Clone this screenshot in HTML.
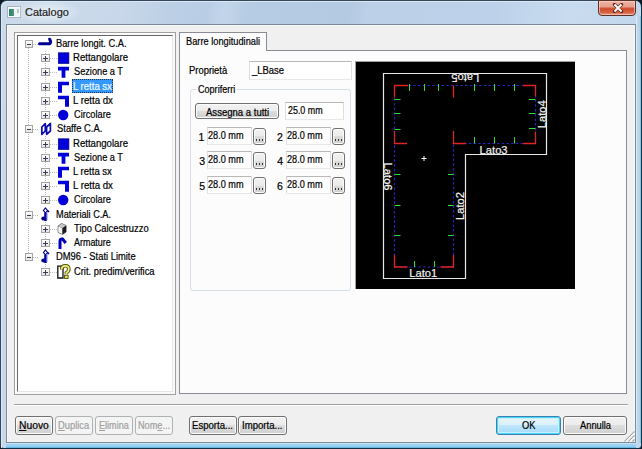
<!DOCTYPE html>
<html><head><meta charset="utf-8"><style>*{margin:0;padding:0;box-sizing:border-box}
html,body{width:642px;height:449px;overflow:hidden;background:#0a1a22}
body{position:relative;font-family:"Liberation Sans",sans-serif;font-size:10px;color:#000}
.a{position:absolute}
.t{position:absolute;white-space:nowrap;transform-origin:0 0;line-height:1;color:#000;-webkit-text-stroke:0.2px currentColor}
u{text-decoration:underline;text-underline-offset:1px}
#win{left:0;top:0;width:642px;height:449px;border:1px solid #34465a;border-right-color:#083048;border-bottom-color:#103048;border-radius:7px 7px 4px 4px;background:linear-gradient(100deg,#cbdaea 0,#c8d8ea 120px,#bccfe5 170px,#b9cee6 205px,#c3d5ea 222px,#b6cce4 245px,#b4cae2 345px,#bcd0e8 362px,#bdd2ea 490px,#c8dbef 560px,#c2d6ec 642px)}
#client{left:6px;top:24px;width:630px;height:419px;border:1px solid #7a8a98;background:#f0f0f0;box-shadow:inset 1px 1px 0 #f8f8f8,inset -1px -1px 0 #f6f6f6}
.btn{position:absolute;border:1px solid #707070;border-radius:3px;background:linear-gradient(#f2f2f2 0,#ebebeb 50%,#dddddd 50%,#cfcfcf 100%);box-shadow:inset 0 0 0 1px #fcfcfc}
.btn.dis{border-color:#adb2b5;background:#f4f4f4;box-shadow:none}
.edit{position:absolute;background:#fff;border:1px solid #dedede;border-top-color:#b8b8b8;border-bottom-color:#e8e8e8}</style></head><body>
<div id="win" class="a"></div>
<div class="a" style="left:1px;top:1px;width:640px;height:447px;border:1px solid #dce8f4;border-right:none;border-bottom:none;border-radius:6px 6px 0 0"></div>
<div class="a" style="left:6px;top:443px;width:630px;height:5px;background:linear-gradient(#cce2f2 0,#cce2f2 20%,#a0d4f4 20%,#90d0f8 70%,#58a8d0 100%)"></div>
<div class="a" style="left:636px;top:16px;width:5px;height:427px;background:linear-gradient(90deg,#dce8f6 0,#dce8f6 20%,#c4d8ec 20%,#b4d4ea 70%,#78c0dc 100%)"></div>
<div class="a" style="left:7px;top:6px;width:14px;height:12px;border:1px solid #a8b4c4;background:#eef3f6;box-shadow:inset 0 0 0 1px #f8fcfc"></div><div class="a" style="left:9px;top:9px;width:5px;height:7px;background:linear-gradient(90deg,#2f7e64,#4a9a80)"></div><div class="a" style="left:17px;top:9px;width:2px;height:4px;background:#b8c0c4"></div>
<div class="a" style="left:14px;top:0px;width:68px;height:24px;background:radial-gradient(closest-side,rgba(240,246,250,.75),rgba(240,246,250,.35) 60%,rgba(240,246,250,0))"></div>
<div class="t" style="left:25.35px;top:7.00px;font-size:11px;transform:scaleX(0.995);color:#222">Catalogo</div>
<div class="a" style="left:598px;top:0;width:38px;height:16px;border:1px solid #5a3028;border-radius:0 0 4px 4px;background:linear-gradient(#eeb4a4 0,#e6a08c 40%,#cf4a2e 55%,#d4603f 80%,#e49a84 100%);box-shadow:inset 0 0 0 1px rgba(255,220,210,.6)"></div>
<svg class="a" style="left:612px;top:3px" width="12" height="10"><path d="M2.5,1.5L9.5,8.5M9.5,1.5L2.5,8.5" stroke="#6a3028" stroke-width="3.4" stroke-linecap="round"/><path d="M2.5,1.5L9.5,8.5M9.5,1.5L2.5,8.5" stroke="#fff" stroke-width="1.8"/></svg>
<div id="client" class="a"></div>
<div class="a" style="left:14px;top:32px;width:162px;height:363px;border:1px solid #a0a0a0;background:#f8f8f8"></div>
<div class="a" style="left:15px;top:33px;width:160px;height:361px;border:1px solid #fff;border-right:none;border-bottom:none"></div>
<div class="a" style="left:17px;top:35px;width:156px;height:357px;background:#fff;border:1px solid #696969;border-right-color:#e6e6e6;border-bottom-color:#e6e6e6"></div>
<svg class="a" style="left:0;top:0" width="180" height="400"><defs><linearGradient id="bg" x1="0" y1="0" x2="0" y2="1"><stop offset="0" stop-color="#fff"/><stop offset="1" stop-color="#e4e4e4"/></linearGradient></defs><path d="M28.5,48V253" stroke="#bcbcbc" stroke-width="1" stroke-dasharray="1 1"/><path d="M45.5,51V111" stroke="#bcbcbc" stroke-width="1" stroke-dasharray="1 1"/><path d="M45.5,136V196" stroke="#bcbcbc" stroke-width="1" stroke-dasharray="1 1"/><path d="M45.5,222V239" stroke="#bcbcbc" stroke-width="1" stroke-dasharray="1 1"/><path d="M45.5,264V268" stroke="#bcbcbc" stroke-width="1" stroke-dasharray="1 1"/><path d="M33,44.5H38" stroke="#bcbcbc" stroke-width="1" stroke-dasharray="1 1"/><rect x="25.5" y="40.5" width="7" height="7" fill="url(#bg)" stroke="#a4a4a4" stroke-width="1"/><path d="M27,44.5H31" stroke="#3a3a50" stroke-width="1"/><path d="M39.5,43.80H48.2Q50.6,43.80 50.6,41.40L49.6,39.20" fill="none" stroke="#000098" stroke-width="3" stroke-linejoin="round" stroke-linecap="round"/><path d="M50,58.5H57" stroke="#bcbcbc" stroke-width="1" stroke-dasharray="1 1"/><rect x="41.5" y="54.5" width="8" height="7" fill="url(#bg)" stroke="#a4a4a4" stroke-width="1"/><path d="M43,58.5H48M45.5,56V61" stroke="#3a3a50" stroke-width="1"/><rect x="58.3" y="52.80" width="10.6" height="10.6" fill="#0000d8" stroke="#000090" stroke-width="0.7"/><path d="M50,72.5H57" stroke="#bcbcbc" stroke-width="1" stroke-dasharray="1 1"/><rect x="41.5" y="68.5" width="8" height="7" fill="url(#bg)" stroke="#a4a4a4" stroke-width="1"/><path d="M43,72.5H48M45.5,70V75" stroke="#3a3a50" stroke-width="1"/><path d="M58,66.70h11v3.8h-3.6v7.2h-3.8v-7.2h-3.6z" fill="#0000d8"/><path d="M50,87.5H57" stroke="#bcbcbc" stroke-width="1" stroke-dasharray="1 1"/><rect x="41.5" y="83.5" width="8" height="7" fill="url(#bg)" stroke="#a4a4a4" stroke-width="1"/><path d="M43,87.5H48M45.5,85V90" stroke="#3a3a50" stroke-width="1"/><path d="M58,81.70h11v3.6h-7v7.4h-4z" fill="#0000d8"/><path d="M50,101.5H57" stroke="#bcbcbc" stroke-width="1" stroke-dasharray="1 1"/><rect x="41.5" y="97.5" width="8" height="7" fill="url(#bg)" stroke="#a4a4a4" stroke-width="1"/><path d="M43,101.5H48M45.5,99V104" stroke="#3a3a50" stroke-width="1"/><path d="M58,95.70h11v11h-4v-7.4h-7z" fill="#0000d8"/><path d="M50,115.5H57" stroke="#bcbcbc" stroke-width="1" stroke-dasharray="1 1"/><rect x="41.5" y="111.5" width="8" height="7" fill="url(#bg)" stroke="#a4a4a4" stroke-width="1"/><path d="M43,115.5H48M45.5,113V118" stroke="#3a3a50" stroke-width="1"/><circle cx="63.2" cy="115.00" r="5.2" fill="#0000d8"/><path d="M33,129.5H38" stroke="#bcbcbc" stroke-width="1" stroke-dasharray="1 1"/><rect x="25.5" y="125.5" width="7" height="7" fill="url(#bg)" stroke="#a4a4a4" stroke-width="1"/><path d="M27,129.5H31" stroke="#3a3a50" stroke-width="1"/><path d="M41.8,127.00L45.3,123.70V131.00L41.8,134.30Z M46.6,127.00L50.4,123.50V131.00L46.6,134.30Z" fill="#fff" stroke="#0a0ab0" stroke-width="1.7" stroke-linejoin="round"/><path d="M50,144.5H57" stroke="#bcbcbc" stroke-width="1" stroke-dasharray="1 1"/><rect x="41.5" y="140.5" width="8" height="7" fill="url(#bg)" stroke="#a4a4a4" stroke-width="1"/><path d="M43,144.5H48M45.5,142V147" stroke="#3a3a50" stroke-width="1"/><rect x="58.3" y="138.80" width="10.6" height="10.6" fill="#0000d8" stroke="#000090" stroke-width="0.7"/><path d="M50,158.5H57" stroke="#bcbcbc" stroke-width="1" stroke-dasharray="1 1"/><rect x="41.5" y="154.5" width="8" height="7" fill="url(#bg)" stroke="#a4a4a4" stroke-width="1"/><path d="M43,158.5H48M45.5,156V161" stroke="#3a3a50" stroke-width="1"/><path d="M58,152.70h11v3.8h-3.6v7.2h-3.8v-7.2h-3.6z" fill="#0000d8"/><path d="M50,172.5H57" stroke="#bcbcbc" stroke-width="1" stroke-dasharray="1 1"/><rect x="41.5" y="168.5" width="8" height="7" fill="url(#bg)" stroke="#a4a4a4" stroke-width="1"/><path d="M43,172.5H48M45.5,170V175" stroke="#3a3a50" stroke-width="1"/><path d="M58,166.70h11v3.6h-7v7.4h-4z" fill="#0000d8"/><path d="M50,186.5H57" stroke="#bcbcbc" stroke-width="1" stroke-dasharray="1 1"/><rect x="41.5" y="182.5" width="8" height="7" fill="url(#bg)" stroke="#a4a4a4" stroke-width="1"/><path d="M43,186.5H48M45.5,184V189" stroke="#3a3a50" stroke-width="1"/><path d="M58,180.70h11v11h-4v-7.4h-7z" fill="#0000d8"/><path d="M50,200.5H57" stroke="#bcbcbc" stroke-width="1" stroke-dasharray="1 1"/><rect x="41.5" y="196.5" width="8" height="7" fill="url(#bg)" stroke="#a4a4a4" stroke-width="1"/><path d="M43,200.5H48M45.5,198V203" stroke="#3a3a50" stroke-width="1"/><circle cx="63.2" cy="200.00" r="5.2" fill="#0000d8"/><path d="M33,215.5H38" stroke="#bcbcbc" stroke-width="1" stroke-dasharray="1 1"/><rect x="25.5" y="211.5" width="7" height="7" fill="url(#bg)" stroke="#a4a4a4" stroke-width="1"/><path d="M27,215.5H31" stroke="#3a3a50" stroke-width="1"/><path d="M45.5,208.00l2,2.5l-2,2.5l-2,-2.5z" fill="#fff" stroke="#000080" stroke-width="1.2"/><path d="M45.5,213.00V221.00" stroke="#0000a0" stroke-width="2.6"/><path d="M47,212.00V220.00" stroke="#8080ff" stroke-width="1"/><circle cx="43.3" cy="218.50" r="2" fill="#000080"/><path d="M47.5,210.50l1.5,1.5" stroke="#000080" stroke-width="1.6"/><path d="M50,229.5H57" stroke="#bcbcbc" stroke-width="1" stroke-dasharray="1 1"/><rect x="41.5" y="225.5" width="8" height="7" fill="url(#bg)" stroke="#a4a4a4" stroke-width="1"/><path d="M43,229.5H48M45.5,227V232" stroke="#3a3a50" stroke-width="1"/><path d="M58,226.00L61.5,223.50L66.2,225.50V232.00L62.5,234.50L58,232.50Z" fill="#707070" stroke="#404040" stroke-width="0.6"/><path d="M58.3,226.20L61.5,223.80L65.8,225.60L62.3,228.00Z" fill="#c8c8c8"/><path d="M58.3,226.40L62.2,228.20V234.00L58.3,232.30Z" fill="#f4f4f4"/><path d="M62.6,228.20L66,225.80V231.80L62.6,234.20Z" fill="#1a1a1a"/><path d="M50,243.5H57" stroke="#bcbcbc" stroke-width="1" stroke-dasharray="1 1"/><rect x="41.5" y="239.5" width="8" height="7" fill="url(#bg)" stroke="#a4a4a4" stroke-width="1"/><path d="M43,243.5H48M45.5,241V246" stroke="#3a3a50" stroke-width="1"/><path d="M60,249.00V241.50Q60,238.50 62.5,239.00L65.8,243.00" fill="none" stroke="#0000b8" stroke-width="3" stroke-linejoin="round"/><path d="M33,257.5H38" stroke="#bcbcbc" stroke-width="1" stroke-dasharray="1 1"/><rect x="25.5" y="253.5" width="7" height="7" fill="url(#bg)" stroke="#a4a4a4" stroke-width="1"/><path d="M27,257.5H31" stroke="#3a3a50" stroke-width="1"/><path d="M45.5,250.00l2,2.5l-2,2.5l-2,-2.5z" fill="#fff" stroke="#000080" stroke-width="1.2"/><path d="M45.5,255.00V263.00" stroke="#0000a0" stroke-width="2.6"/><path d="M47,254.00V262.00" stroke="#8080ff" stroke-width="1"/><circle cx="43.3" cy="260.50" r="2" fill="#000080"/><path d="M47.5,252.50l1.5,1.5" stroke="#000080" stroke-width="1.6"/><path d="M50,272.5H57" stroke="#bcbcbc" stroke-width="1" stroke-dasharray="1 1"/><rect x="41.5" y="268.5" width="8" height="7" fill="url(#bg)" stroke="#a4a4a4" stroke-width="1"/><path d="M43,272.5H48M45.5,270V275" stroke="#3a3a50" stroke-width="1"/><path d="M57.8,266.20H63V278.00H57.8Z" fill="#fff" stroke="#101010" stroke-width="1.3"/><path d="M61.6,269.50Q61.6,265.80 65.3,265.80Q68.8,265.80 68.8,269.00Q68.8,271.50 66.4,272.80V274.20" fill="none" stroke="#505010" stroke-width="3.6"/><path d="M61.6,269.50Q61.6,265.80 65.3,265.80Q68.8,265.80 68.8,269.00Q68.8,271.50 66.4,272.80V274.20" fill="none" stroke="#f0f070" stroke-width="1.8"/><rect x="64.5" y="275.30" width="3.6" height="3.2" fill="#e0e060" stroke="#505010" stroke-width="0.9"/></svg><div class="t" style="left:56.36px;top:39.00px;font-size:10px;transform:scaleX(0.926);">Barre longit. C.A.</div><div class="t" style="left:73.33px;top:53.00px;font-size:10px;transform:scaleX(0.960);">Rettangolare</div><div class="t" style="left:73.69px;top:67.00px;font-size:10px;transform:scaleX(0.921);">Sezione a T</div><div class="a" style="left:72px;top:79px;width:41px;height:14px;background:#3399ff;border:1px dotted #203040"></div><div class="t" style="left:73.34px;top:82.00px;font-size:10px;transform:scaleX(0.954);color:#f0f8ff">L retta sx</div><div class="t" style="left:73.33px;top:96.00px;font-size:10px;transform:scaleX(0.965);">L retta dx</div><div class="t" style="left:73.64px;top:110.00px;font-size:10px;transform:scaleX(0.921);">Circolare</div><div class="t" style="left:56.68px;top:124.00px;font-size:10px;transform:scaleX(0.940);">Staffe C.A.</div><div class="t" style="left:73.33px;top:139.00px;font-size:10px;transform:scaleX(0.960);">Rettangolare</div><div class="t" style="left:73.69px;top:153.00px;font-size:10px;transform:scaleX(0.921);">Sezione a T</div><div class="t" style="left:73.34px;top:167.00px;font-size:10px;transform:scaleX(0.954);">L retta sx</div><div class="t" style="left:73.33px;top:181.00px;font-size:10px;transform:scaleX(0.965);">L retta dx</div><div class="t" style="left:73.64px;top:195.00px;font-size:10px;transform:scaleX(0.921);">Circolare</div><div class="t" style="left:56.37px;top:210.00px;font-size:10px;transform:scaleX(0.916);">Materiali C.A.</div><div class="t" style="left:73.91px;top:224.00px;font-size:10px;transform:scaleX(0.937);">Tipo Calcestruzzo</div><div class="t" style="left:74.10px;top:238.00px;font-size:10px;transform:scaleX(0.894);">Armature</div><div class="t" style="left:56.35px;top:252.00px;font-size:10px;transform:scaleX(0.937);">DM96 - Stati Limite</div><div class="t" style="left:73.63px;top:267.00px;font-size:10px;transform:scaleX(0.935);">Crit. predim/verifica</div>
<div class="a" style="left:179px;top:50px;width:448px;height:344px;border:1px solid #898c95;background:#fcfcfc"></div>
<div class="a" style="left:179px;top:32px;width:88px;height:19px;border:1px solid #898c95;border-bottom:none;background:#fcfcfc"></div>
<div class="t" style="left:185.96px;top:36.00px;font-size:10.5px;transform:scaleX(0.881);">Barre longitudinali</div>
<div class="t" style="left:189.25px;top:66.00px;font-size:10px;transform:scaleX(0.941);">Proprietà</div>
<div class="edit" style="left:249px;top:61px;width:103px;height:19px"></div>
<div class="t" style="left:252.44px;top:66.00px;font-size:10px;transform:scaleX(0.945);">_LBase</div>
<div class="a" style="left:190px;top:89px;width:161px;height:202px;border:1px solid #d5dfe5;border-radius:3px"></div>
<div class="a" style="left:196px;top:84px;width:41px;height:10px;background:#fcfcfc"></div>
<div class="t" style="left:197.55px;top:85.00px;font-size:10px;transform:scaleX(0.906);">Copriferri</div>
<div class="btn" style="left:195px;top:103px;width:84px;height:16px"></div>
<div class="t" style="left:205.80px;top:108.00px;font-size:10px;transform:scaleX(0.954);">Assegna a tutti</div>
<div class="edit" style="left:285px;top:102px;width:59px;height:18px"></div>
<div class="t" style="left:287.55px;top:106.00px;font-size:10px;transform:scaleX(0.890);">25.0 mm</div>
<div class="t" style="left:198.51px;top:132.00px;font-size:10.5px;transform:scaleX(1.000);">1</div>
<div class="edit" style="left:207px;top:127.1px;width:45px;height:18px"></div>
<div class="t" style="left:208.04px;top:131.00px;font-size:10px;transform:scaleX(0.914);">28.0 mm</div>
<div class="btn" style="left:253px;top:128.1px;width:13px;height:17px"></div>
<div class="a" style="left:256px;top:138.6px;width:8px;height:2px;background:repeating-linear-gradient(90deg,#333 0 1.5px,transparent 1.5px 3px)"></div>
<div class="t" style="left:276.88px;top:132.00px;font-size:10.5px;transform:scaleX(1.000);">2</div>
<div class="edit" style="left:285.5px;top:127.1px;width:45px;height:18px"></div>
<div class="t" style="left:286.54px;top:131.00px;font-size:10px;transform:scaleX(0.914);">28.0 mm</div>
<div class="btn" style="left:331.5px;top:128.1px;width:13px;height:17px"></div>
<div class="a" style="left:334.5px;top:138.6px;width:8px;height:2px;background:repeating-linear-gradient(90deg,#333 0 1.5px,transparent 1.5px 3px)"></div>
<div class="t" style="left:199.18px;top:156.00px;font-size:10.5px;transform:scaleX(1.000);">3</div>
<div class="edit" style="left:207px;top:151.4px;width:45px;height:18px"></div>
<div class="t" style="left:208.04px;top:155.00px;font-size:10px;transform:scaleX(0.914);">28.0 mm</div>
<div class="btn" style="left:253px;top:152.4px;width:13px;height:17px"></div>
<div class="a" style="left:256px;top:162.9px;width:8px;height:2px;background:repeating-linear-gradient(90deg,#333 0 1.5px,transparent 1.5px 3px)"></div>
<div class="t" style="left:277.19px;top:156.00px;font-size:10.5px;transform:scaleX(1.000);">4</div>
<div class="edit" style="left:285.5px;top:151.4px;width:45px;height:18px"></div>
<div class="t" style="left:286.54px;top:155.00px;font-size:10px;transform:scaleX(0.914);">28.0 mm</div>
<div class="btn" style="left:331.5px;top:152.4px;width:13px;height:17px"></div>
<div class="a" style="left:334.5px;top:162.9px;width:8px;height:2px;background:repeating-linear-gradient(90deg,#333 0 1.5px,transparent 1.5px 3px)"></div>
<div class="t" style="left:199.18px;top:181.00px;font-size:10.5px;transform:scaleX(1.000);">5</div>
<div class="edit" style="left:207px;top:176.0px;width:45px;height:18px"></div>
<div class="t" style="left:208.04px;top:180.00px;font-size:10px;transform:scaleX(0.914);">28.0 mm</div>
<div class="btn" style="left:253px;top:177.0px;width:13px;height:17px"></div>
<div class="a" style="left:256px;top:187.5px;width:8px;height:2px;background:repeating-linear-gradient(90deg,#333 0 1.5px,transparent 1.5px 3px)"></div>
<div class="t" style="left:276.88px;top:181.00px;font-size:10.5px;transform:scaleX(1.000);">6</div>
<div class="edit" style="left:285.5px;top:176.0px;width:45px;height:18px"></div>
<div class="t" style="left:286.54px;top:180.00px;font-size:10px;transform:scaleX(0.914);">28.0 mm</div>
<div class="btn" style="left:331.5px;top:177.0px;width:13px;height:17px"></div>
<div class="a" style="left:334.5px;top:187.5px;width:8px;height:2px;background:repeating-linear-gradient(90deg,#333 0 1.5px,transparent 1.5px 3px)"></div>
<div class="a" style="left:355px;top:61px;width:220px;height:228px;background:#000;border-top:1px solid #a0a0a0;border-left:1px solid #a0a0a0"></div><svg class="a" style="left:0;top:0" width="642" height="449"><path d="M383.5,73.5H546.5V154.5H465.5V278.5H383.5Z" fill="none" stroke="#e8e8e8" stroke-width="1.2"/><path d="M394.5,85.5H535.5V143.5H453.5V267H394.5Z" fill="none" stroke="#2424c0" stroke-width="1.2" stroke-dasharray="2.5 2.2"/><path d="M394.5,97.5V85.5H408 M453.5,85.5V97.5 M523,85.5H535.5V96.5 M535.5,131.5V143.5H523 M394.5,131V143.5H407 M453.5,131V143.5H466 M394.5,255V267H407.5 M453.5,255V267H440.5" fill="none" stroke="#e02424" stroke-width="1.3"/><path d="M409.5,84V91 M424.5,84V91 M438.5,84V91 M474.5,84V91 M494.5,84V91 M514.5,84V91 M474.5,137V143.5 M494.5,137V143.5 M514.5,137V143.5 M529,99.5H535.5 M529,113.5H535.5 M529,128.5H535.5 M394.5,99.5H400.5 M394.5,113.5H400.5 M394.5,129.5H400.5 M394.5,174.5H400.5 M394.5,205.5H400.5 M394.5,235.5H400.5 M448,174.5H453.5 M448,205.5H453.5 M448,235.5H453.5 M414.5,261V267 M434.5,261V267" fill="none" stroke="#30e030" stroke-width="1"/><path d="M421.5,158.5H426.5M424,156V161" stroke="#fff" stroke-width="1"/><text x="423.2" y="277.3" font-family="Liberation Sans" font-size="11.2" fill="#f4f4f4" stroke="#f4f4f4" stroke-width="0.2" text-anchor="middle">Lato1</text><text x="493.6" y="153.5" font-family="Liberation Sans" font-size="11.2" fill="#f4f4f4" stroke="#f4f4f4" stroke-width="0.2" text-anchor="middle">Lato3</text><text font-family="Liberation Sans" font-size="11.2" fill="#f4f4f4" stroke="#f4f4f4" stroke-width="0.2" text-anchor="middle" transform="translate(464.2,206) rotate(-90)">Lato2</text><text font-family="Liberation Sans" font-size="11.2" fill="#f4f4f4" stroke="#f4f4f4" stroke-width="0.2" text-anchor="middle" transform="translate(545.8,114.3) rotate(-90)">Lato4</text><text font-family="Liberation Sans" font-size="11.2" fill="#f4f4f4" stroke="#f4f4f4" stroke-width="0.2" text-anchor="middle" transform="translate(383.6,176.6) rotate(90)">Lato6</text><text font-family="Liberation Sans" font-size="11.2" fill="#f4f4f4" stroke="#f4f4f4" stroke-width="0.2" text-anchor="middle" transform="translate(465.2,74.3) rotate(180)">Lato5</text></svg>
<div class="a" style="left:14px;top:404px;width:614px;height:1px;background:#a0a0a0"></div>
<div class="a" style="left:14px;top:405px;width:614px;height:1px;background:#fff"></div>
<div class="btn" style="left:15px;top:416px;width:38px;height:19px;"></div><div class="t" style="left:18.88px;top:421.00px;font-size:10px;transform:scaleX(1.029);"><u>N</u>uovo</div>
<div class="btn dis" style="left:55px;top:416px;width:38px;height:19px;"></div><div class="t" style="left:58.25px;top:421.00px;font-size:10px;transform:scaleX(0.934);color:#a0a0a0"><u>D</u>uplica</div>
<div class="btn dis" style="left:95px;top:416px;width:38px;height:19px;"></div><div class="t" style="left:98.77px;top:421.00px;font-size:10px;transform:scaleX(0.909);color:#a0a0a0"><u>E</u>limina</div>
<div class="btn dis" style="left:135px;top:416px;width:38px;height:19px;"></div><div class="t" style="left:137.67px;top:421.00px;font-size:10px;transform:scaleX(0.916);color:#a0a0a0">Nom<u>e</u>...</div>
<div class="btn" style="left:189px;top:416px;width:48px;height:19px;"></div><div class="t" style="left:191.93px;top:421.00px;font-size:10px;transform:scaleX(0.957);">Esporta...</div>
<div class="btn" style="left:238px;top:416px;width:49px;height:19px;"></div><div class="t" style="left:242.34px;top:421.00px;font-size:10px;transform:scaleX(0.958);">Importa...</div>
<div class="btn" style="left:496px;top:416px;width:65px;height:19px;border-color:#3c7fb1;box-shadow:inset 0 0 0 1px #48d8fb,inset 0 0 0 2px #c8f0fb;background:linear-gradient(#eaf6fd 0,#d9f0fc 50%,#bee6fd 50%,#a7d9f5 100%)"></div><div class="t" style="left:522.28px;top:421.00px;font-size:10px;transform:scaleX(0.928);">OK</div>
<div class="btn" style="left:563px;top:416px;width:64px;height:19px;"></div><div class="t" style="left:580.00px;top:421.00px;font-size:10px;transform:scaleX(0.930);">Annulla</div>
<svg class="a" style="left:622px;top:429px" width="13" height="13"><path d="M12.5,2.5L2.5,12.5M12.5,6.5L6.5,12.5M12.5,10.5L10.5,12.5" stroke="#a8a8a8" stroke-width="1.1"/><path d="M12.5,3.8L3.8,12.5M12.5,7.8L7.8,12.5" stroke="#fff" stroke-width="1"/></svg>
</body></html>
